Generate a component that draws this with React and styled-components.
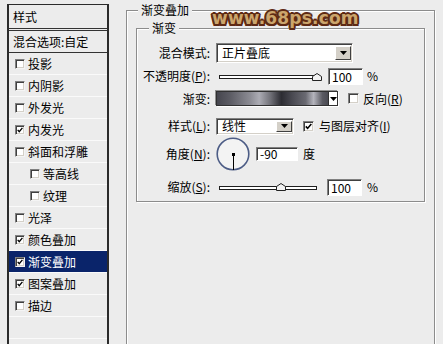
import React from 'react';
import styled, { createGlobalStyle } from 'styled-components';

const Global = createGlobalStyle`
  html, body {
    margin: 0;
    background: #ececec;
  }
`;

const Page = styled.div`
  position: relative;
  display: flex;
  align-items: flex-start;
  height: 344px;
  overflow: hidden;
  background: #ececec;
  font: 12px/14px "Noto Sans CJK SC", "Liberation Sans", sans-serif;
  color: #000;
`;

const Sidebar = styled.div`
  flex: none;
  width: 98px;
  height: 360px;
  margin: 4px 0 0 7px;
  border: 2px solid #2b2b2b;
  border-top-width: 1px;
  border-bottom: none;
  background: #ececec;
`;

const SidebarHeader = styled.div`
  height: 23px;
  line-height: 23px;
  padding-left: 4px;
  border-bottom: 3px double #333;
`;

const BlendRow = styled.div`
  height: 21px;
  line-height: 22px;
  padding-left: 4px;
  border-bottom: 1px solid #333;
`;

const StyleItem = styled.div`
  display: flex;
  align-items: center;
  gap: 3px;
  height: 21px;
  padding-left: ${p => (p.$indent ? 21 : 6)}px;
  border-bottom: 1px solid #fafafa;
  background: ${p => (p.$selected ? '#0a246a' : 'transparent')};
  color: ${p => (p.$selected ? '#fff' : '#000')};
`;

const Box = styled.span`
  flex: none;
  display: flex;
  align-items: center;
  justify-content: center;
  width: ${p => p.$s}px;
  height: ${p => p.$s}px;
  box-sizing: border-box;
  background: #fff;
  border: 1px solid;
  border-color: #808080 #f4f4f4 #f4f4f4 #808080;
  box-shadow: inset 1px 1px 0 #404040, inset -1px -1px 0 #d4d0c8;
`;

const GroupBox = styled.fieldset`
  box-sizing: border-box;
  min-width: 0;
  margin: ${p => p.$margin};
  padding: ${p => p.$padding};
  width: ${p => p.$w || 'auto'};
  height: ${p => p.$h || 'auto'};
  border: 1px solid #8c8c8c;
  box-shadow: inset 1px 1px 0 #fff, 1px 1px 0 #fff;
`;

const Legend = styled.legend`
  margin-left: ${p => p.$ml}px;
  padding: 0 3px;
  line-height: 14px;
  background: #ececec;
`;

const Form = styled.div`
  padding-top: 8px;
`;

const Row = styled.div`
  display: flex;
  align-items: center;
  height: ${p => p.$h}px;
  margin-top: ${p => p.$mt}px;
`;

const Label = styled.span`
  flex: none;
  width: 73px;
  margin-right: 6px;
  text-align: right;
  white-space: nowrap;
`;

const Select = styled.div`
  flex: none;
  display: flex;
  align-items: center;
  justify-content: space-between;
  width: ${p => p.$w}px;
  height: ${p => p.$h}px;
  box-sizing: border-box;
  padding-left: 5px;
  background: #fff;
  border: 1px solid;
  border-color: #808080 #fff #fff #808080;
  box-shadow: inset 1px 1px 0 #404040, inset -1px -1px 0 #d4d0c8;
`;

const SelectButton = styled.span`
  display: flex;
  align-items: center;
  justify-content: center;
  width: 16px;
  height: calc(100% - 4px);
  margin-right: 1px;
  box-sizing: border-box;
  background: #d4d0c8;
  border: 1px solid;
  border-color: #fff #404040 #404040 #fff;
`;

const Slider = styled.div`
  flex: none;
  position: relative;
  width: 106px;
  height: 100%;
`;

const Track = styled.div`
  position: absolute;
  left: 3px;
  right: 5px;
  top: 8px;
  height: 4px;
  box-sizing: border-box;
  background: #fff;
  border: 1px solid #1e1e1e;
`;

const Thumb = styled.svg`
  position: absolute;
  top: ${p => p.$top}px;
  margin-left: -5px;
`;

const NumInput = styled.div`
  flex: none;
  width: ${p => p.$w}px;
  height: ${p => p.$h}px;
  margin-left: ${p => p.$ml}px;
  box-sizing: border-box;
  padding-left: 3px;
  line-height: ${p => p.$h - 2}px;
  background: #fff;
  border: 1px solid;
  border-color: #808080 #fff #fff #808080;
  box-shadow: inset 1px 1px 0 #404040;
`;

const Unit = styled.span`
  margin-left: ${p => p.$ml}px;
`;

const GradientBox = styled.div`
  flex: none;
  display: flex;
  width: 122px;
  height: 15px;
  box-sizing: border-box;
  border: 1px solid #303030;
  box-shadow: -1px -1px 0 #909090, 1px 1px 0 #fff;
`;

const GradientFill = styled.div`
  flex: 1;
  background: linear-gradient(90deg,
    #46464e 0%, #5c5c64 12%, #8c8c94 30%, #acacb4 38%, #727279 48%,
    #2c2c32 58%, #4a4a52 68%, #6a6a72 80%, #b4b4bc 87%, #5a5a62 95%, #4a4a52 100%);
  border-right: 1px solid #303030;
`;

const GradientArrow = styled.div`
  display: flex;
  align-items: center;
  justify-content: center;
  width: 8px;
  background: #fff;
`;

const CheckLabel = styled.span`
  margin-left: ${p => p.$ml}px;
  white-space: nowrap;
`;

const Dial = styled.svg`
  flex: none;
  display: block;
`;

const Watermark = styled.div`
  position: absolute;
  left: 212px;
  top: 9px;
  font: bold 17px/18px "DejaVu Sans", sans-serif;
  color: #cba56c;
  letter-spacing: 0.2px;
  text-shadow:
    -2px 0 #5e2a14, 2px 0 #5e2a14, 0 -2px #5e2a14, 0 2px #5e2a14,
    -1.5px -1.5px #5e2a14, 1.5px -1.5px #5e2a14, -1.5px 1.5px #5e2a14, 1.5px 1.5px #5e2a14;
`;

const Arrow = () => (
  <svg width="7" height="4" viewBox="0 0 7 4">
    <polygon points="0,0 7,0 3.5,4" fill="#000" />
  </svg>
);

const CheckBox = ({ checked, size = 10 }) => (
  <Box $s={size}>
    {checked && (
      <svg width={size - 4} height={size - 4} viewBox="0 0 7 7">
        <polyline points="0.8,3.4 2.6,5.4 6.3,1" fill="none" stroke="#000" strokeWidth="1.6" />
      </svg>
    )}
  </Box>
);

const RangeSlider = ({ value }) => (
  <Slider>
    <Track />
    <Thumb $top={value === 1 ? 6 : 5} width="10" height="8" viewBox="0 0 10 8" style={{ left: 3 + value * 98 }}>
      <polygon points="0.5,7.5 0.5,3.5 5,0.5 9.5,3.5 9.5,7.5" fill="#f2f2f2" stroke="#222" />
    </Thumb>
  </Slider>
);

const styles = [
  { name: '投影' },
  { name: '内阴影' },
  { name: '外发光' },
  { name: '内发光', checked: true },
  { name: '斜面和浮雕' },
  { name: '等高线', indent: true },
  { name: '纹理', indent: true },
  { name: '光泽' },
  { name: '颜色叠加', checked: true },
  { name: '渐变叠加', checked: true, selected: true },
  { name: '图案叠加', checked: true },
  { name: '描边' },
  { name: '' },
];

export default function App() {
  return (
    <Page>
      <Global />
      <Sidebar>
        <SidebarHeader>样式</SidebarHeader>
        <BlendRow>混合选项:自定</BlendRow>
        {styles.map((s, i) => (
          <StyleItem key={i} $indent={s.indent} $selected={s.selected}>
            {s.name && <CheckBox checked={s.checked} />}
            {s.name}
          </StyleItem>
        ))}
      </Sidebar>

      <GroupBox $margin="3px 0 0 17px" $padding="0 9px" $w="309px" $h="400px">
        <Legend $ml={2}>渐变叠加</Legend>
        <GroupBox $margin="4px 0 0 0" $padding="0 0 5px 0">
          <Legend $ml={12}>渐变</Legend>
          <Form>
            <Row $h={20} $mt={0}>
              <Label>混合模式:</Label>
              <Select $w={137} $h={20}>
                正片叠底
                <SelectButton><Arrow /></SelectButton>
              </Select>
            </Row>
            <Row $h={18} $mt={4}>
              <Label>不透明度(<u>P</u>):</Label>
              <RangeSlider value={1} />
              <NumInput $w={35} $h={17} $ml={6}>100</NumInput>
              <Unit $ml={4}>%</Unit>
            </Row>
            <Row $h={19} $mt={4}>
              <Label>渐变:</Label>
              <GradientBox>
                <GradientFill />
                <GradientArrow><Arrow /></GradientArrow>
              </GradientBox>
              <CheckLabel $ml={10}><CheckBox size={11} /></CheckLabel>
              <CheckLabel $ml={4}>反向(<u>R</u>)</CheckLabel>
            </Row>
            <Row $h={20} $mt={8}>
              <Label>样式(<u>L</u>):</Label>
              <Select $w={78} $h={17}>
                线性
                <SelectButton><Arrow /></SelectButton>
              </Select>
              <CheckLabel $ml={9}><CheckBox size={11} checked /></CheckLabel>
              <CheckLabel $ml={5}>与图层对齐(<u>I</u>)</CheckLabel>
            </Row>
            <Row $h={34} $mt={1}>
              <Label>角度(<u>N</u>):</Label>
              <Dial width="34" height="34" viewBox="0 0 34 34">
                <circle cx="17" cy="17" r="15.8" fill="#f3f3f3" stroke="#4d5d86" strokeWidth="1.6" />
                <line x1="17.5" y1="17" x2="17.5" y2="33" stroke="#000" strokeWidth="1" />
                <rect x="16" y="16" width="3" height="3" fill="#000" />
              </Dial>
              <NumInput $w={42} $h={14} $ml={6}>-90</NumInput>
              <Unit $ml={5}>度</Unit>
            </Row>
            <Row $h={18} $mt={7}>
              <Label>缩放(<u>S</u>):</Label>
              <RangeSlider value={0.63} />
              <NumInput $w={35} $h={17} $ml={5}>100</NumInput>
              <Unit $ml={5}>%</Unit>
            </Row>
          </Form>
        </GroupBox>
      </GroupBox>

      <Watermark>www.68ps.com</Watermark>
    </Page>
  );
}
